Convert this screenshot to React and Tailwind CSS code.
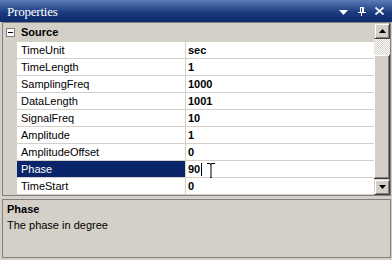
import React from "react";

const rows = [
  ["TimeUnit", "sec"],
  ["TimeLength", "1"],
  ["SamplingFreq", "1000"],
  ["DataLength", "1001"],
  ["SignalFreq", "10"],
  ["Amplitude", "1"],
  ["AmplitudeOffset", "0"],
  ["Phase", "90"],
  ["TimeStart", "0"],
];

function ScrollBtn({ up }) {
  return (
    <div className="w-[16px] h-[16px] bg-[#d4d0c8] border-t border-l border-t-[#d4d0c8] border-l-[#d4d0c8] border-b border-r border-b-[#404040] border-r-[#404040] shadow-[inset_1px_1px_#ffffff,inset_-1px_-1px_#808080] flex items-center justify-center">
      <svg width="7" height="4" viewBox="0 0 7 4">
        {up ? (
          <polygon points="3.5,0 7,4 0,4" fill="#000" />
        ) : (
          <polygon points="0,0 7,0 3.5,4" fill="#000" />
        )}
      </svg>
    </div>
  );
}

export default function App() {
  return (
    <div className="w-[392px] h-[260px] bg-[#d4d0c8] flex flex-col font-['Liberation_Sans',sans-serif] text-[11px] text-black overflow-hidden">
      {/* Title bar */}
      <div className="h-[22px] flex items-center bg-[linear-gradient(to_bottom,#5a7cb8,#1c3c80_55%,#0c2a6c)] text-white">
        <span className="pl-[7px] font-['Liberation_Serif',serif] text-[13px] leading-none tracking-[-0.2px]">Properties</span>
        <div className="ml-auto flex items-center">
          <svg width="9" height="5" viewBox="0 0 9 5" className="mr-[10px] mt-[2px]">
            <polygon points="0,0 9,0 4.5,5" fill="#fff" />
          </svg>
          <svg width="8" height="9" viewBox="0 0 8 9" className="mr-[9px]">
            <rect x="2" y="0" width="4" height="1" fill="#fff" />
            <rect x="2" y="0" width="1" height="5" fill="#fff" />
            <rect x="4" y="0" width="2" height="5" fill="#fff" />
            <rect x="0" y="5" width="8" height="1" fill="#fff" />
            <rect x="3" y="6" width="1" height="3" fill="#fff" />
          </svg>
          <svg width="9" height="8" viewBox="0 0 9 8" className="mr-[8px]">
            <path d="M0.5 0.5 L8.5 7.5 M8.5 0.5 L0.5 7.5" stroke="#fff" strokeWidth="1.6" />
          </svg>
        </div>
      </div>

      {/* Grid */}
      <div className="ml-[2px] w-[389px] h-[174px] border border-[#808080] flex">
        <div className="flex-1 flex flex-col bg-[#d4d0c8]">
          <div className="h-[19px] flex items-center shrink-0">
            <div className="w-[14px] flex justify-center pl-[1px]">
              <div className="w-[9px] h-[9px] border border-[#808080] bg-white flex items-center justify-center">
                <div className="w-[5px] h-[1px] bg-black" />
              </div>
            </div>
            <span className="pl-[4px] font-bold">Source</span>
          </div>
          {rows.map(([n, v]) => {
            const sel = n === "Phase";
            return (
              <div key={n} className="h-[17px] flex shrink-0 border-b border-[#d4d0c8]">
                <div className="w-[14px] shrink-0" />
                <div
                  className={
                    "w-[168px] shrink-0 flex items-center pl-[4px] " +
                    (sel ? "bg-[#0a246a] text-white" : "bg-white")
                  }
                >
                  {n}
                </div>
                <div className="w-[1px] shrink-0 bg-[#d4d0c8]" />
                <div className="flex-1 bg-white flex items-center pl-[2px] font-bold relative">
                  {v}
                  {sel && (
                    <>
                      <div className="w-[1px] h-[13px] bg-black ml-[1px]" />
                      <svg width="8" height="16" viewBox="0 0 8 16" className="absolute left-[21px] top-[2px]">
                        <path d="M0 0.5 H3 M5 0.5 H8 M3 0.5 Q4 0.5 4 2 V14 Q4 15.5 3 15.5 H0 M4 2 Q4 0.5 5 0.5 M4 14 Q4 15.5 5 15.5 H8" stroke="#000" strokeWidth="1" fill="none" />
                      </svg>
                    </>
                  )}
                </div>
              </div>
            );
          })}
        </div>
        {/* Scrollbar */}
        <div className="w-[16px] flex flex-col shrink-0">
          <ScrollBtn up />
          <div className="h-[16px] bg-[repeating-conic-gradient(#ffffff_0_25%,#d4d0c8_0_50%)] bg-[length:2px_2px]" />
          <div className="flex-1 bg-[#d4d0c8] border-b border-r border-b-[#404040] border-r-[#404040] shadow-[inset_1px_1px_#ffffff,inset_-1px_-1px_#808080]" />
          <ScrollBtn />
        </div>
      </div>

      {/* Description */}
      <div className="ml-[2px] mt-[3px] w-[389px] h-[59px] border border-[#808080] px-[4px] pt-[2px]">
        <div className="font-bold leading-[14px]">Phase</div>
        <div className="leading-[14px] mt-[2px]">The phase in degree</div>
      </div>
    </div>
  );
}
